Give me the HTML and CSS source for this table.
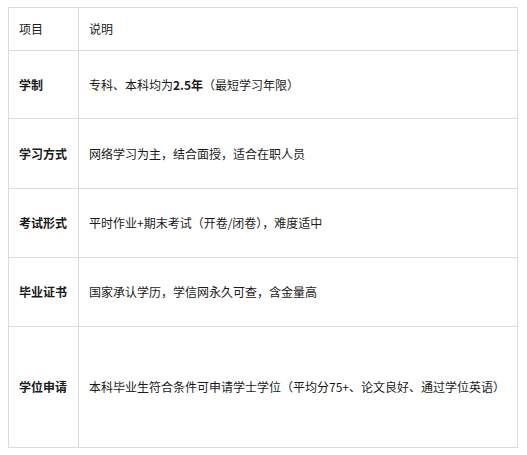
FILE: index.html
```html
<!DOCTYPE html>
<html lang="zh-CN">
<head>
<meta charset="utf-8">
<link rel="stylesheet" href="styles.css">
</head>
<body>
<table class="info">
  <tr class="r-head"><td class="k k-head">项目</td><td class="v">说明</td></tr>
  <tr class="r1"><td class="k">学制</td><td class="v">专科、本科均为<strong>2.5年</strong>（最短学习年限）</td></tr>
  <tr class="r2"><td class="k">学习方式</td><td class="v">网络学习为主，结合面授，适合在职人员</td></tr>
  <tr class="r3"><td class="k">考试形式</td><td class="v">平时作业+期末考试（开卷/闭卷），难度适中</td></tr>
  <tr class="r4"><td class="k">毕业证书</td><td class="v">国家承认学历，学信网永久可查，含金量高</td></tr>
  <tr class="r5"><td class="k">学位申请</td><td class="v">本科毕业生符合条件可申请学士学位（平均分75+、论文良好、通过学位英语）</td></tr>
</table>
</body>
</html>
```
FILE: styles.css
```css
html, body { background: #fff; }
body {
  margin: 7px 8px 8px 8px;
  font-family: "Microsoft YaHei", "Noto Sans CJK SC", "Noto Sans", sans-serif;
  font-size: 12px;
  color: #1a1a1a;
}
.info {
  border-collapse: collapse;
  width: 510px;
}
.info td {
  border: 1px solid #dcdcdc;
  padding: 0 10px;
  vertical-align: middle;
  line-height: 18px;
}
.k { width: 49px; font-weight: bold; }
.k-head { font-weight: normal; }
.v { padding-left: 10px; }
.info strong { font-weight: bold; }
.r-head { height: 43px; }
.r1 { height: 68px; }
.r2 { height: 70px; }
.r3 { height: 69px; }
.r4 { height: 69px; }
.r5 { height: 121px; }
```
